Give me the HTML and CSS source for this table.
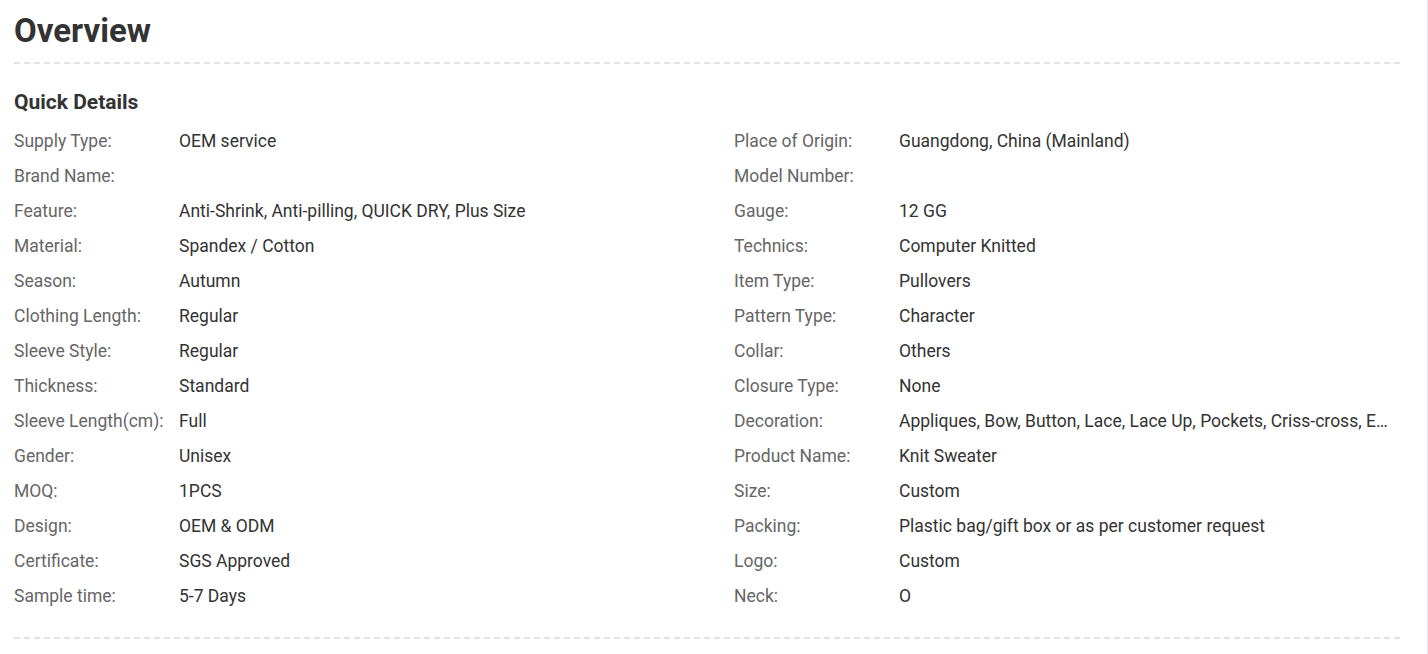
FILE: index.html
```html
<!DOCTYPE html>
<html lang="en">
<head>
<meta charset="UTF-8" />
<meta name="viewport" content="width=device-width, initial-scale=1" />
<title>Overview</title>
<link rel="stylesheet" href="styles.css">
</head>
<body>
  <div class="page">
    <div class="overview">
      <h2 class="title">Overview</h2>
      <div class="dash"></div>

      <h3 class="subtitle">Quick Details</h3>
      <ul class="details">
        <li><span class="label">Supply Type:</span><span class="value">OEM service</span></li>
        <li><span class="label">Place of Origin:</span><span class="value">Guangdong, China (Mainland)</span></li>
        <li><span class="label">Brand Name:</span><span class="value"></span></li>
        <li><span class="label">Model Number:</span><span class="value"></span></li>
        <li><span class="label">Feature:</span><span class="value">Anti-Shrink, Anti-pilling, QUICK DRY, Plus Size</span></li>
        <li><span class="label">Gauge:</span><span class="value">12 GG</span></li>
        <li><span class="label">Material:</span><span class="value">Spandex / Cotton</span></li>
        <li><span class="label">Technics:</span><span class="value">Computer Knitted</span></li>
        <li><span class="label">Season:</span><span class="value">Autumn</span></li>
        <li><span class="label">Item Type:</span><span class="value">Pullovers</span></li>
        <li><span class="label">Clothing Length:</span><span class="value">Regular</span></li>
        <li><span class="label">Pattern Type:</span><span class="value">Character</span></li>
        <li><span class="label">Sleeve Style:</span><span class="value">Regular</span></li>
        <li><span class="label">Collar:</span><span class="value">Others</span></li>
        <li><span class="label">Thickness:</span><span class="value">Standard</span></li>
        <li><span class="label">Closure Type:</span><span class="value">None</span></li>
        <li><span class="label">Sleeve Length(cm):</span><span class="value">Full</span></li>
        <li><span class="label">Decoration:</span><span class="value" title="Appliques, Bow, Button, Lace, Lace Up, Pockets, Criss-cross, Embroidery">Appliques, Bow, Button, Lace, Lace Up, Pockets, Criss-cross, E…</span></li>
        <li><span class="label">Gender:</span><span class="value">Unisex</span></li>
        <li><span class="label">Product Name:</span><span class="value">Knit Sweater</span></li>
        <li><span class="label">MOQ:</span><span class="value">1PCS</span></li>
        <li><span class="label">Size:</span><span class="value">Custom</span></li>
        <li><span class="label">Design:</span><span class="value">OEM &amp; ODM</span></li>
        <li><span class="label">Packing:</span><span class="value">Plastic bag/gift box or as per customer request</span></li>
        <li><span class="label">Certificate:</span><span class="value">SGS Approved</span></li>
        <li><span class="label">Logo:</span><span class="value">Custom</span></li>
        <li><span class="label">Sample time:</span><span class="value">5-7 Days</span></li>
        <li><span class="label">Neck:</span><span class="value">O</span></li>
      </ul>
      <div class="dash"></div>
    </div>
  </div>
</body>
</html>
```

FILE: styles.css
```css
body {
  margin: 0;
  background: #fff;
  font-family: Roboto, "Liberation Sans", sans-serif;
  color: #333;
}
.page {
  border-right: 1px solid #e3e5ea;
  min-height: 654px;
  box-sizing: border-box;
}
.overview {
  padding: 0 24px 0 14px;
}
.title {
  margin: 0;
  padding-top: 11px;
  font-size: 33px;
  line-height: 40px;
  font-weight: 700;
  color: #333;
}
.dash {
  height: 2px;
  margin-top: 11px;
  background: repeating-linear-gradient(to right, #e3e4e9 0 6px, transparent 6px 10px);
}
.subtitle {
  margin: 24px 0 6px;
  font-size: 21px;
  line-height: 28px;
  font-weight: 700;
  color: #333;
}
.details {
  list-style: none;
  margin: 0;
  padding: 0;
  display: grid;
  grid-template-columns: 720px 1fr;
}
.details li {
  display: flex;
  min-width: 0;
  height: 35px;
  padding-top: 2px;
  box-sizing: border-box;
  align-items: center;
  font-size: 17.5px;
}
.label {
  flex: 0 0 165px;
  white-space: nowrap;
  color: #666;
}
.value {
  flex: 1;
  min-width: 0;
  color: #333;
  white-space: nowrap;
  overflow: hidden;
}
.details + .dash {
  margin-top: 25px;
}
```
